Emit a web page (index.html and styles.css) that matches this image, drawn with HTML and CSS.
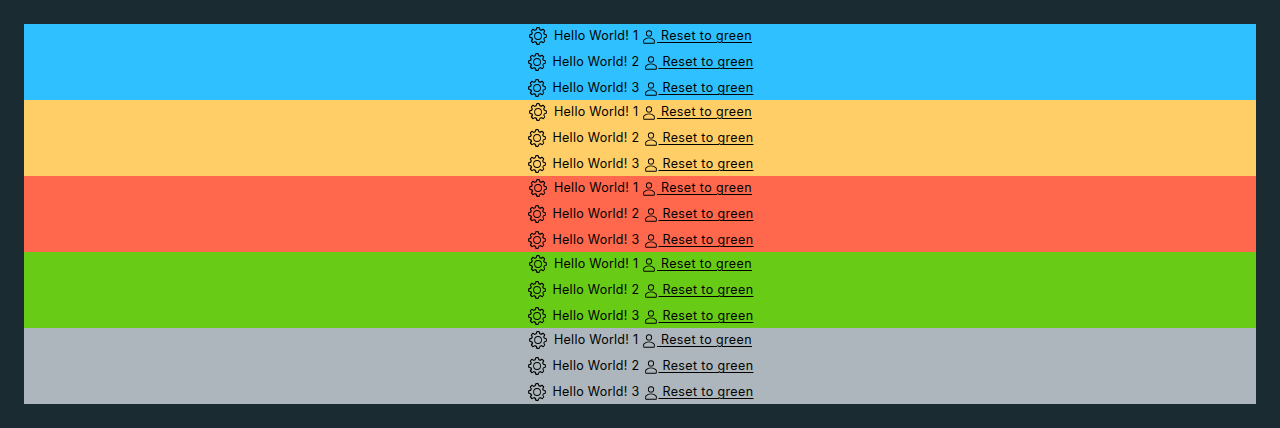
FILE: index.html
```
<!DOCTYPE html>
<html lang="en">
<head>
<meta charset="utf-8">
<title>Alerts</title>
<link rel="stylesheet" href="styles.css">
</head>
<body>
<svg class="defs" aria-hidden="true">
  <symbol id="cog" viewBox="0 0 36 36">
    <path d="M18.1 11A7 7 0 1 0 18.1 25A7 7 0 1 0 18.1 11zm0 12.4A5.4 5.4 0 1 1 18.1 12.6A5.4 5.4 0 1 1 18.1 23.4z"/>
    <path d="M32.8 14.7L30 13.8l-.6-1.5 1.4-2.6c.3-.6.2-1.4-.3-1.9l-2.4-2.4c-.5-.5-1.3-.6-1.9-.3l-2.6 1.4-1.5-.6-.9-2.8C21 2.5 20.4 2 19.7 2h-3.4c-.7 0-1.3.5-1.4 1.2L14 6c-.6.1-1.1.3-1.6.6L9.8 5.2c-.6-.3-1.4-.2-1.9.3L5.5 7.9c-.5.5-.6 1.3-.3 1.9l1.3 2.5c-.2.5-.4 1.1-.6 1.6l-2.8.9c-.6.2-1.1.8-1.1 1.5v3.4c0 .7.5 1.3 1.2 1.5l2.8.9.6 1.5-1.4 2.6c-.3.6-.2 1.4.3 1.9l2.4 2.4c.5.5 1.3.6 1.9.3l2.6-1.4 1.5.6.9 2.9c.2.6.8 1.1 1.5 1.1h3.4c.7 0 1.3-.5 1.5-1.1l.9-2.9 1.5-.6 2.6 1.4c.6.3 1.4.2 1.9-.3l2.4-2.4c.5-.5.6-1.3.3-1.9l-1.4-2.6.6-1.5 2.9-.9c.6-.2 1.1-.8 1.1-1.5v-3.4c0-.7-.5-1.4-1.2-1.6zm-.4 4.7l-3.6 1.1-.1.5-.9 2.1-.3.5 1.8 3.3-2 2-3.3-1.8-.5.3c-.7.4-1.4.7-2.1.9l-.5.1-1.1 3.6h-2.8l-1.1-3.6-.5-.1-2.1-.9-.5-.3-3.3 1.8-2-2 1.8-3.3-.3-.5c-.4-.7-.7-1.4-.9-2.1l-.1-.5L4 19.4v-2.8l3.4-1 .2-.5c.2-.8.5-1.5.9-2.2l.3-.5-1.7-3.3 2-2 3.2 1.8.5-.3c.7-.4 1.4-.7 2.2-.9l.5-.2L16.6 4h2.8l1.1 3.5.5.2c.7.2 1.4.5 2.1.9l.5.3 3.3-1.8 2 2-1.8 3.3.3.5c.4.7.7 1.4.9 2.1l.1.5 3.6 1.1z"/>
  </symbol>
  <symbol id="user" viewBox="0 0 36 36">
    <path d="M18 17a7 7 0 1 0-7-7 7 7 0 0 0 7 7zm0-12a5 5 0 1 1-5 5 5 5 0 0 1 5-5z"/>
    <path d="M30.47 24.37a17.16 17.16 0 0 0-24.93 0A2 2 0 0 0 5 25.74V31a2 2 0 0 0 2 2h22a2 2 0 0 0 2-2v-5.26a2 2 0 0 0-.53-1.37zM29 31H7v-5.27a15.17 15.17 0 0 1 22 0z"/>
  </symbol>
</svg>
<main class="stack">
  <section class="group info">
    <div class="row first"><svg class="cog"><use href="#cog"/></svg><span class="label">Hello World! 1</span><svg class="user"><use href="#user"/></svg><a class="link">&nbsp;Reset to green</a></div>
    <div class="row"><svg class="cog"><use href="#cog"/></svg><span class="label">Hello World! 2</span><svg class="user"><use href="#user"/></svg><a class="link">&nbsp;Reset to green</a></div>
    <div class="row"><svg class="cog"><use href="#cog"/></svg><span class="label">Hello World! 3</span><svg class="user"><use href="#user"/></svg><a class="link">&nbsp;Reset to green</a></div>
  </section>
  <section class="group warning">
    <div class="row first"><svg class="cog"><use href="#cog"/></svg><span class="label">Hello World! 1</span><svg class="user"><use href="#user"/></svg><a class="link">&nbsp;Reset to green</a></div>
    <div class="row"><svg class="cog"><use href="#cog"/></svg><span class="label">Hello World! 2</span><svg class="user"><use href="#user"/></svg><a class="link">&nbsp;Reset to green</a></div>
    <div class="row"><svg class="cog"><use href="#cog"/></svg><span class="label">Hello World! 3</span><svg class="user"><use href="#user"/></svg><a class="link">&nbsp;Reset to green</a></div>
  </section>
  <section class="group danger">
    <div class="row first"><svg class="cog"><use href="#cog"/></svg><span class="label">Hello World! 1</span><svg class="user"><use href="#user"/></svg><a class="link">&nbsp;Reset to green</a></div>
    <div class="row"><svg class="cog"><use href="#cog"/></svg><span class="label">Hello World! 2</span><svg class="user"><use href="#user"/></svg><a class="link">&nbsp;Reset to green</a></div>
    <div class="row"><svg class="cog"><use href="#cog"/></svg><span class="label">Hello World! 3</span><svg class="user"><use href="#user"/></svg><a class="link">&nbsp;Reset to green</a></div>
  </section>
  <section class="group success">
    <div class="row first"><svg class="cog"><use href="#cog"/></svg><span class="label">Hello World! 1</span><svg class="user"><use href="#user"/></svg><a class="link">&nbsp;Reset to green</a></div>
    <div class="row"><svg class="cog"><use href="#cog"/></svg><span class="label">Hello World! 2</span><svg class="user"><use href="#user"/></svg><a class="link">&nbsp;Reset to green</a></div>
    <div class="row"><svg class="cog"><use href="#cog"/></svg><span class="label">Hello World! 3</span><svg class="user"><use href="#user"/></svg><a class="link">&nbsp;Reset to green</a></div>
  </section>
  <section class="group neutral">
    <div class="row first"><svg class="cog"><use href="#cog"/></svg><span class="label">Hello World! 1</span><svg class="user"><use href="#user"/></svg><a class="link">&nbsp;Reset to green</a></div>
    <div class="row"><svg class="cog"><use href="#cog"/></svg><span class="label">Hello World! 2</span><svg class="user"><use href="#user"/></svg><a class="link">&nbsp;Reset to green</a></div>
    <div class="row"><svg class="cog"><use href="#cog"/></svg><span class="label">Hello World! 3</span><svg class="user"><use href="#user"/></svg><a class="link">&nbsp;Reset to green</a></div>
  </section>
</main>
</body>
</html>
```
FILE: styles.css
```
body {
  margin: 0;
  padding: 24px;
  background: #1b2b32;
  color: #000;
  font: 400 12.5px/24px Inter, "Liberation Sans", sans-serif;
}
.defs { display: none; }
.group {
  display: flex;
  flex-direction: column;
  gap: 2px;
}
.info { background: #2ec0ff; }
.warning { background: #ffce66; }
.danger { background: #ff684c; }
.success { background: #68cc16; }
.neutral { background: #adb6bc; }
.row {
  display: flex;
  justify-content: center;
  height: 24px;
}
.row svg { flex: none; fill: currentColor; }
.cog {
  width: 20px;
  height: 20px;
  margin: 2px 6px 0 0;
}
.user {
  width: 16px;
  height: 16px;
  margin-top: 5px;
}
.label, .link { white-space: nowrap; }
.label {
  width: 90px;
  letter-spacing: 0.26px;
}
.first .label { width: 87px; }
.link {
  width: 95px;
  letter-spacing: 0.38px;
  text-decoration: underline;
  text-decoration-thickness: 1px;
  text-underline-offset: 2px;
}
```
